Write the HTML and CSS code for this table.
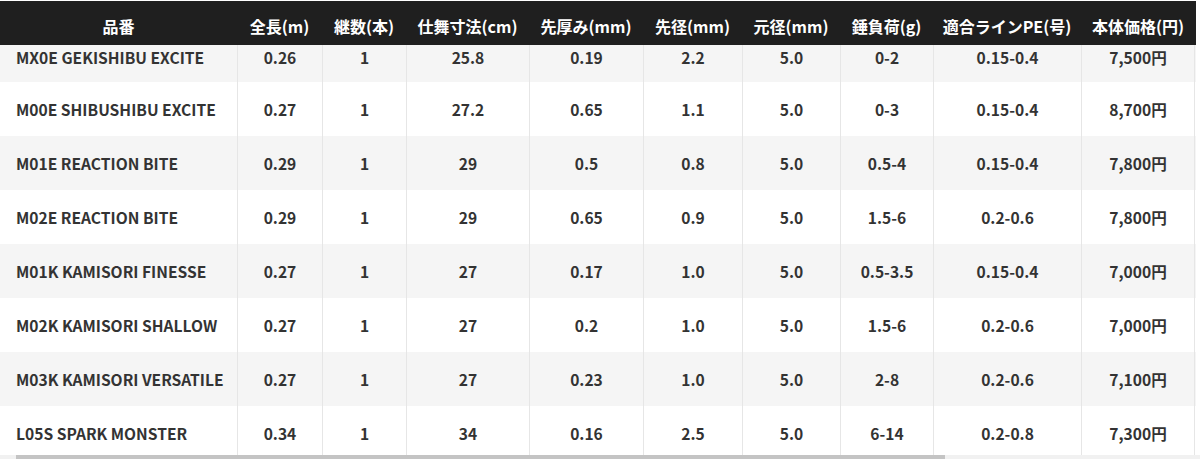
FILE: index.html
```html
<!DOCTYPE html>
<html lang="ja">
<head>
<meta charset="utf-8">
<title>Spec table</title>
<link rel="stylesheet" href="styles.css">
</head>
<body>
<div class="wrap">
  <div class="table">
    <div class="row head">
      <div class="cell">品番</div>
      <div class="cell">全長(m)</div>
      <div class="cell">継数(本)</div>
      <div class="cell">仕舞寸法(cm)</div>
      <div class="cell">先厚み(mm)</div>
      <div class="cell">先径(mm)</div>
      <div class="cell">元径(mm)</div>
      <div class="cell">錘負荷(g)</div>
      <div class="cell">適合ラインPE(号)</div>
      <div class="cell">本体価格(円)</div>
    </div>
    <div class="body">
      <div class="row odd first">
        <div class="cell name">MX0E GEKISHIBU EXCITE</div>
        <div class="cell">0.26</div><div class="cell">1</div><div class="cell">25.8</div><div class="cell">0.19</div><div class="cell">2.2</div><div class="cell">5.0</div><div class="cell">0-2</div><div class="cell">0.15-0.4</div><div class="cell">7,500円</div>
      </div>
      <div class="row">
        <div class="cell name">M00E SHIBUSHIBU EXCITE</div>
        <div class="cell">0.27</div><div class="cell">1</div><div class="cell">27.2</div><div class="cell">0.65</div><div class="cell">1.1</div><div class="cell">5.0</div><div class="cell">0-3</div><div class="cell">0.15-0.4</div><div class="cell">8,700円</div>
      </div>
      <div class="row odd">
        <div class="cell name">M01E REACTION BITE</div>
        <div class="cell">0.29</div><div class="cell">1</div><div class="cell">29</div><div class="cell">0.5</div><div class="cell">0.8</div><div class="cell">5.0</div><div class="cell">0.5-4</div><div class="cell">0.15-0.4</div><div class="cell">7,800円</div>
      </div>
      <div class="row">
        <div class="cell name">M02E REACTION BITE</div>
        <div class="cell">0.29</div><div class="cell">1</div><div class="cell">29</div><div class="cell">0.65</div><div class="cell">0.9</div><div class="cell">5.0</div><div class="cell">1.5-6</div><div class="cell">0.2-0.6</div><div class="cell">7,800円</div>
      </div>
      <div class="row odd">
        <div class="cell name">M01K KAMISORI FINESSE</div>
        <div class="cell">0.27</div><div class="cell">1</div><div class="cell">27</div><div class="cell">0.17</div><div class="cell">1.0</div><div class="cell">5.0</div><div class="cell">0.5-3.5</div><div class="cell">0.15-0.4</div><div class="cell">7,000円</div>
      </div>
      <div class="row">
        <div class="cell name">M02K KAMISORI SHALLOW</div>
        <div class="cell">0.27</div><div class="cell">1</div><div class="cell">27</div><div class="cell">0.2</div><div class="cell">1.0</div><div class="cell">5.0</div><div class="cell">1.5-6</div><div class="cell">0.2-0.6</div><div class="cell">7,000円</div>
      </div>
      <div class="row odd">
        <div class="cell name">M03K KAMISORI VERSATILE</div>
        <div class="cell">0.27</div><div class="cell">1</div><div class="cell">27</div><div class="cell">0.23</div><div class="cell">1.0</div><div class="cell">5.0</div><div class="cell">2-8</div><div class="cell">0.2-0.6</div><div class="cell">7,100円</div>
      </div>
      <div class="row last">
        <div class="cell name">L05S SPARK MONSTER</div>
        <div class="cell">0.34</div><div class="cell">1</div><div class="cell">34</div><div class="cell">0.16</div><div class="cell">2.5</div><div class="cell">5.0</div><div class="cell">6-14</div><div class="cell">0.2-0.8</div><div class="cell">7,300円</div>
      </div>
    </div>
  </div>
  <div class="scrollbar"><div class="thumb"></div></div>
</div>
</body>
</html>
```

FILE: styles.css
```css
html, body {
  margin: 0;
  padding: 0;
  background: #ffffff;
}
body {
  font-family: "Noto Sans CJK JP", "Noto Sans", sans-serif;
  color: #333333;
  overflow: hidden;
}
.wrap {
  width: 1200px;
  height: 459px;
  display: flex;
  flex-direction: column;
  padding-top: 1px;
  box-sizing: border-box;
}
.table {
  width: 1196px;
  flex: 1;
  min-height: 0;
  display: flex;
  flex-direction: column;
  overflow: hidden;
}
.row {
  display: grid;
  grid-template-columns: 237px 85px 84px 123px 114px 99px 98px 93px 148px 114px;
  height: 54px;
  flex: none;
  background: #ffffff;
}
.row .cell {
  display: flex;
  align-items: center;
  justify-content: center;
  font-weight: 700;
  font-size: 15.6px;
  line-height: 24px;
  border-left: 1px solid #e6e6e6;
  white-space: nowrap;
}
.row .cell:first-child {
  border-left: none;
}
.row .cell:last-child {
  border-right: 1px solid #e6e6e6;
}
.row .cell.name {
  justify-content: flex-start;
  padding-left: 16px;
}
.row.odd {
  background: #f5f5f5;
}
.row.head {
  height: 44px;
  background: #1f1f1f;
  color: #ffffff;
}
.row.head .cell {
  border: none;
  font-size: 16px;
  padding-top: 6px;
}
.row.first {
  height: 37px;
}
.row.first .cell {
  align-items: flex-start;
  padding-top: 0;
}
.body {
  display: flex;
  flex-direction: column;
}
.scrollbar {
  height: 4px;
  background: #f1f1f1;
  padding-left: 16px;
  flex: none;
}
.thumb {
  width: 929px;
  height: 100%;
  background: #c4c4c4;
}
```
